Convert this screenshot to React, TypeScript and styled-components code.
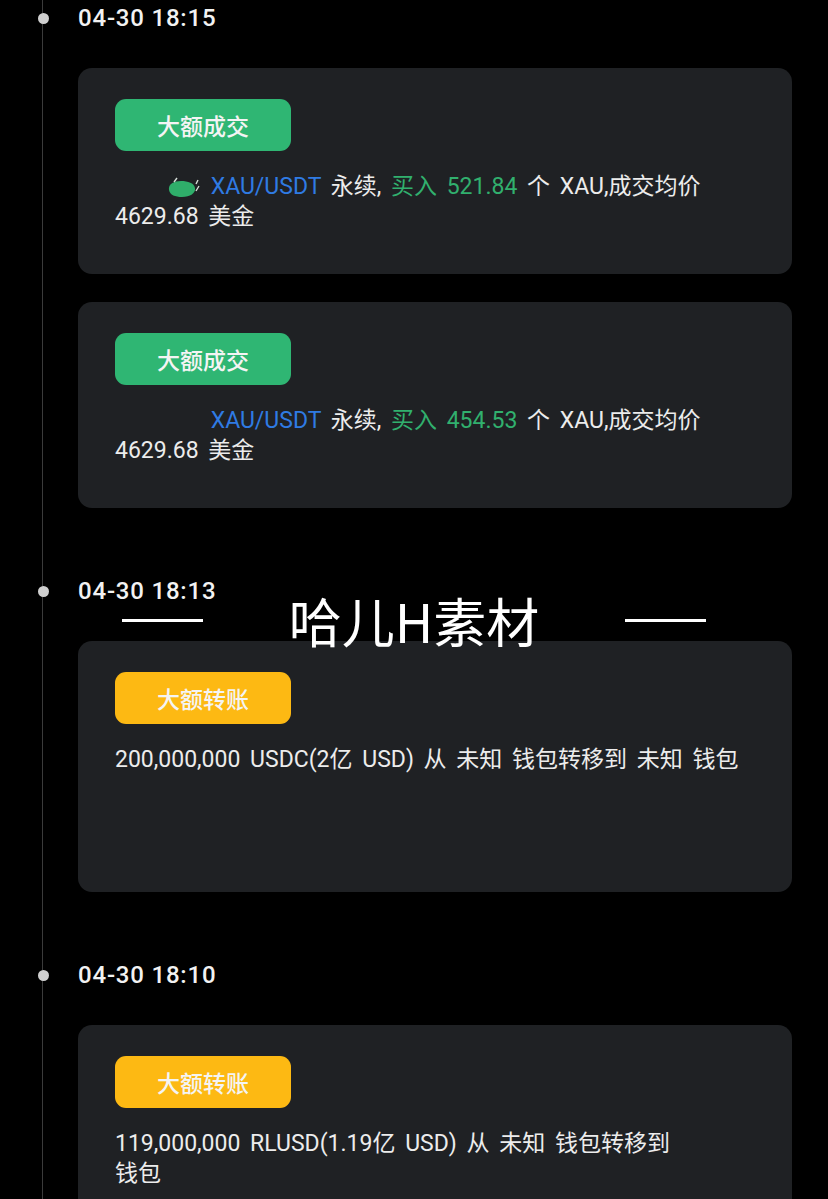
import React from "react";
import styled, { createGlobalStyle } from "styled-components";

const GlobalStyle = createGlobalStyle`
  html, body {
    margin: 0;
    padding: 0;
    background: #000;
  }
  body {
    font-family: Roboto, "Noto Sans CJK SC", sans-serif;
    overflow: hidden;
  }
`;

const Page = styled.div`
  position: relative;
  width: 828px;
  height: 1199px;
  overflow: hidden;
  background: #000;
`;

const Timeline = styled.div`
  margin-left: 42px;
  border-left: 1px solid #3b3b3b;
  padding-left: 35px;
  padding-right: 36px;
  min-height: 1199px;
  display: flex;
  flex-direction: column;
  gap: 65px;
`;

const Group = styled.section`
  display: flex;
  flex-direction: column;
`;

const TimeRow = styled.div`
  height: 36px;
  display: flex;
  align-items: center;
  margin-bottom: 32px;
`;

const Dot = styled.span`
  width: 11px;
  height: 11px;
  border-radius: 50%;
  background: #cfcfcf;
  margin-left: -40.5px;
  margin-right: 29.5px;
  flex: none;
`;

const Time = styled.span`
  font-family: Roboto, sans-serif;
  font-size: 24px;
  font-weight: 500;
  letter-spacing: 0.8px;
  color: #f2f2f2;
`;

const Cards = styled.div`
  display: flex;
  flex-direction: column;
  gap: 28px;
`;

const Card = styled.div<{ $minH?: number }>`
  background: #1f2124;
  border-radius: 14px;
  padding: 31px 22px 42px 37px;
  min-height: ${(p) => (p.$minH ? `${p.$minH}px` : "auto")};
  box-sizing: border-box;
  display: flex;
  flex-direction: column;
  align-items: flex-start;
  gap: 21px;
`;

const Badge = styled.div<{ $kind: "trade" | "transfer" }>`
  width: 176px;
  height: 52px;
  border-radius: 11px;
  background: ${(p) => (p.$kind === "trade" ? "#2fb673" : "#fdb913")};
  color: #f4f4f4;
  font-family: "Noto Sans CJK SC", sans-serif;
  font-size: 23px;
  font-weight: 500;
  display: flex;
  align-items: center;
  justify-content: center;
`;

const Body = styled.p`
  margin: 0;
  font-family: Roboto, "Noto Sans CJK SC", sans-serif;
  font-size: 23px;
  line-height: 30px;
  word-spacing: 4px;
  color: #ececec;
`;

const Pair = styled.span`
  color: #2f7be3;
`;

const Buy = styled.span`
  color: #31b06e;
`;

const Plain = styled.span`
  color: #ececec;
`;

const Masked = styled.span`
  display: inline-flex;
  justify-content: flex-end;
  align-items: center;
  width: 86px;
  height: 22px;
  vertical-align: -4px;
  box-sizing: border-box;
`;

const Watermark = styled.div`
  position: absolute;
  left: 0;
  right: 0;
  top: 591px;
  display: flex;
  align-items: center;
  justify-content: center;
  gap: 86px;
  pointer-events: none;
`;

const WaterLine = styled.span`
  width: 81px;
  height: 3px;
  background: #fff;
`;

const WaterText = styled.span`
  font-family: "Noto Sans CJK SC", sans-serif;
  font-size: 53px;
  font-weight: 400;
  color: #fff;
  line-height: 58px;
`;

const Blob = () => (
  <svg width="34" height="22" viewBox="0 0 34 22">
    <path
      d="M2 14 C1 8 7 5 14 5 C21 5 27 7 28 12 C29 17 23 21 15 21 C8 21 3 19 2 14 Z"
      fill="#2fae6a"
    />
    <path d="M7 6 L10 2" stroke="#d5ddd7" strokeWidth="1.4" fill="none" />
    <path d="M29 8 L31 4 M29 15 L32 10" stroke="#d5ddd7" strokeWidth="1.4" fill="none" />
  </svg>
);

const TradeCard = ({ qty, blob }: { qty: string; blob?: boolean }) => (
  <Card>
    <Badge $kind="trade">大额成交</Badge>
    <Body>
      <Masked>{blob ? <Blob /> : null}</Masked> <Pair>XAU/USDT</Pair> <Plain>永续,</Plain>{" "}
      <Buy>买入 {qty}</Buy> <Plain>个 XAU,成交均价</Plain> <Plain>4629.68</Plain>{" "}
      <Plain>美金</Plain>
    </Body>
  </Card>
);

export default function App() {
  return (
    <Page>
      <GlobalStyle />
      <Timeline>
        <Group>
          <TimeRow>
            <Dot />
            <Time>04-30 18:15</Time>
          </TimeRow>
          <Cards>
            <TradeCard qty="521.84" blob />
            <TradeCard qty="454.53" />
          </Cards>
        </Group>
        <Group>
          <TimeRow>
            <Dot />
            <Time>04-30 18:13</Time>
          </TimeRow>
          <Cards>
            <Card $minH={251}>
              <Badge $kind="transfer">大额转账</Badge>
              <Body>200,000,000 USDC(2亿 USD) 从 未知 钱包转移到 未知 钱包</Body>
            </Card>
          </Cards>
        </Group>
        <Group>
          <TimeRow>
            <Dot />
            <Time>04-30 18:10</Time>
          </TimeRow>
          <Cards>
            <Card $minH={251}>
              <Badge $kind="transfer">大额转账</Badge>
              <Body>
                119,000,000 RLUSD(1.19亿 USD) 从 未知 钱包转移到
                <br />
                钱包
              </Body>
            </Card>
          </Cards>
        </Group>
      </Timeline>
      <Watermark>
        <WaterLine />
        <WaterText>哈儿H素材</WaterText>
        <WaterLine />
      </Watermark>
    </Page>
  );
}
